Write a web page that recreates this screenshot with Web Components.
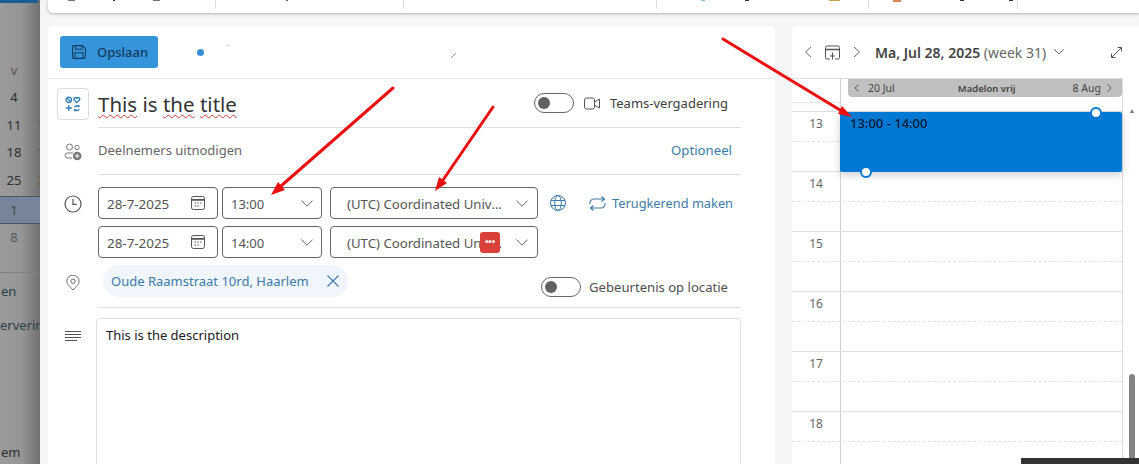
<!DOCTYPE html>
<html lang="nl">
<head>
<meta charset="utf-8">
<title>Gebeurtenis</title>
<style>
  html, body { margin: 0; height: 464px; overflow: hidden; }
  body {
    display: flex;
    position: relative;
    width: 1139px;
    background: #f5f5f5;
    font-family: "Noto Sans", "Open Sans", sans-serif;
  }
  main-shell { flex: 1; min-width: 0; }
  svg { display: block; }
</style>
</head>
<body>

<side-strip></side-strip>

<main-shell>
  <top-toolbar></top-toolbar>
  <event-form>
    <form-row>
      <svg slot="icon" style="border:1px solid #dcdcdc;border-radius:4px;padding:7px;box-sizing:content-box" width="16" height="16" viewBox="0 0 16 16" fill="none" stroke="#2f7cb3" stroke-width="1.3">
        <circle cx="3.8" cy="3.8" r="2.7"/><path d="M2 2l3.600 3.600"/>
        <path d="M11.800 6.600L9.300 4a1.500 1.500 0 0 1 2.500-1.700A1.500 1.500 0 0 1 14.400 4z"/>
        <path d="M.8 12h6M3.800 9v6"/>
        <path d="M9.400 11.300c.5-1.800 3-2 4.400-.9M13.900 9v1.600h-1.600M14.200 13c-.5 1.800-3 2-4.400.9M9.700 15.200v-1.600h1.600"/>
      </svg>
      <title-line></title-line>
    </form-row>
    <form-row short>
      <svg slot="icon" width="18" height="18" viewBox="0 0 18 18" fill="none" stroke="#777" stroke-width="1">
        <circle cx="5.500" cy="4" r="3"/><circle cx="13" cy="4.500" r="2.200"/>
        <path d="M8 15H3.500A2.500 2.500 0 0 1 1 12.500 2.500 2.500 0 0 1 3.500 10H9"/>
        <circle cx="13.200" cy="13" r="4.300" fill="#777" stroke="none"/>
        <path d="M13.200 10.800v4.400M11 13h4.400" stroke="#fff"/>
      </svg>
      <invite-line></invite-line>
    </form-row>
    <form-row plain first-time>
      <svg slot="icon" width="18" height="18" viewBox="0 0 18 18" fill="none" stroke="#555" stroke-width="1.200">
        <circle cx="9" cy="9" r="8"/><path d="M9 4v5.400h3.800"/>
      </svg>
      <time-line recurring start="13:00"></time-line>
    </form-row>
    <form-row plain second-time>
      <time-line start="14:00"></time-line>
    </form-row>
    <form-row location>
      <svg slot="icon" width="14" height="16" viewBox="0 0 16 18" fill="none" stroke="#666" stroke-width="1.100">
        <path d="M8 17C4.500 13.400 1 10.400 1 7a7 7 0 0 1 14 0c0 3.400-3.500 6.400-7 10z"/><circle cx="8" cy="7" r="2.500"/>
      </svg>
      <location-line></location-line>
    </form-row>
    <form-row plain description>
      <svg slot="icon" width="16" height="10" viewBox="0 0 16 10" stroke="#555" stroke-width="1">
        <path d="M0 .5h16M0 3.500h16M0 6.500h16M0 9.500h12"/>
      </svg>
      <description-box>This is the description</description-box>
    </form-row>
  </event-form>
</main-shell>

<red-arrows></red-arrows>

<script>
function define(name, html) {
  customElements.define(name, class extends HTMLElement {
    constructor() {
      super();
      this.attachShadow({ mode: "open" });
    }
    connectedCallback() {
      this.shadowRoot.innerHTML = typeof html === "function" ? html(this) : html;
    }
  });
}

const chevron = `<svg width="12" height="7" viewBox="0 0 12 7" fill="none" stroke="#666" stroke-width="1"><path d="M.4.600L6 6.200 11.600.6"/></svg>`;
const calendarIcon = `<svg width="14" height="14" viewBox="0 0 14 14" fill="none" stroke="#555" stroke-width="1"><rect x=".5" y=".5" width="13" height="13" rx="2"/><path d="M.5 3.800h13" stroke-width="1.800"/><path d="M3.500 7h1.500M6.300 7h1.500M9 7h1.500M3.500 10h1.500M6.300 10h1.500"/></svg>`;

define("main-shell", `
  <style>:host { display: block; }</style>
  <slot></slot>
`);

define("side-strip", `
  <style>
    :host {
      display: block; width: 40px; height: 464px; overflow: hidden; flex: none;
      background: linear-gradient(90deg, #9b9b9b 0, #959595 55%, #717171 100%);
      color: #2e2e2e; font-size: 13px;
    }
    .top { height: 3px; background: #1e5c96; margin-right: 2px; margin-bottom: 53px; }
    .r { display: flex; height: 27.5px; align-items: center; }
    .r b { font-weight: 400; width: 28px; text-align: center; flex: none; }
    .r i { font-style: normal; color: #7a5a3a; margin-left: 9px; }
    .sel { height: 26px; margin-top: 2px; background: #76859a; border-block: 1px solid #4c5663; color: #444; }
    .dim { color: #555; }
    hr { border: 0; border-top: 1px solid #7f7f7f; margin: 21px 0 0; }
    .link { white-space: nowrap; color: #263f4c; margin-left: 1px; height: 34px; line-height: 34px; }
    .a { margin-top: 1px; }
    .b { margin-left: 0; }
    .c { margin-top: 93px; color: #2e2e2e; }
  </style>
  <div class="top"></div>
  <div class="r dim"><b>v</b></div>
  <div class="r"><b>4</b></div>
  <div class="r"><b>11</b><i>1</i></div>
  <div class="r"><b>18</b><i>1</i></div>
  <div class="r"><b>25</b><i>2</i></div>
  <div class="r sel"><b>1</b></div>
  <div class="r dim"><b>8</b></div>
  <hr>
  <div class="link a">en</div>
  <div class="link b">erverin</div>
  <div class="link c">em</div>
`);

define("top-toolbar", `
  <style>
    :host {
      display: flex; height: 13px; margin-left: 8px; background: #fff;
      border-radius: 0 0 0 5px; box-shadow: 0 1px 3px rgba(0,0,0,.28);
      position: relative;
    }
    div { border-right: 1px solid #dcdcdc; height: 9px; flex: none; display: flex; gap: 38px; padding-left: 20px; box-sizing: border-box; }
    i { display: block; height: 1px; width: 7px; background: #777; }
  </style>
  <div style="width:168px"><i></i><i style="width:2px;background:#333"></i><i></i></div>
  <div style="width:188px"><i style="width:2px;margin-left:50px;background:#666"></i></div>
  <div style="width:253px"></div>
  <div style="width:212px;gap:40px"><i style="width:4px;margin-left:24px;background:#8bb8dc"></i><i style="width:4px;background:#333"></i><i style="width:11px;margin-left:40px;background:#bca24c"></i></div>
  <div style="width:149px;gap:45px"><i style="width:8px;margin-left:4px;height:2px;background:#d98a58"></i><i style="width:4px;margin-left:14px;background:#333"></i><i style="width:4px;background:#333"></i></div>
`);

define("event-form", `
  <style>
    :host { display: flex; gap: 17px; margin: 13px 0 0 8px; height: 438px; }
    .card { width: 727px; flex: none; background: #fff; border-radius: 4px 4px 0 0; overflow: hidden; }
    header { height: 53px; box-sizing: border-box; border-bottom: 1px solid #e8e8e8; display: flex; align-items: center; padding-left: 12px; }
    .save {
      width: 98px; height: 32px; box-sizing: border-box; background: #3495dc; border-radius: 3px;
      display: flex; align-items: center; gap: 11px; padding-left: 12px;
      color: #17395a; font-size: 13px; font-weight: 500;
    }
    .dot { width: 7px; height: 7px; border-radius: 50%; background: #3490d4; margin-left: 39px; }
    .speck { width: 3px; height: 1px; background: #ddd; margin: -14px 0 0 22px; }
    .speck2 { width: 5px; height: 5px; margin: 6px 0 0 222px; }
  </style>
  <section class="card">
    <header>
      <div class="save">
        <svg width="14" height="14" viewBox="0 0 14 14" fill="none" stroke="#17395a" stroke-width="1.100">
          <path d="M.6 2A1.400 1.400 0 0 1 2 .6h8.500l2.900 2.900V12A1.400 1.400 0 0 1 12 13.400H2A1.400 1.400 0 0 1 .6 12z"/>
          <path d="M3.500.8v3.500h6.500V.8M3 13.200V7.800h8v5.400"/>
        </svg>
        <span>Opslaan</span>
      </div>
      <span class="dot"></span>
      <span class="speck"></span>
      <svg class="speck2" viewBox="0 0 5 5"><path d="M0 5l5-5" stroke="#aaa"/></svg>
    </header>
    <slot></slot>
  </section>
  <calendar-panel></calendar-panel>
`);

define("form-row", (el) => {
  const isLoc = el.hasAttribute("location");
  const isFirst = el.hasAttribute("first-time");
  const isSecond = el.hasAttribute("second-time");
  const isDesc = el.hasAttribute("description");
  const height = el.hasAttribute("short") ? 47 : isFirst ? 44 : isSecond ? 39 : isLoc ? 50 : isDesc ? 146 : 49;
  return `
  <style>
    :host { display: flex; height: ${height}px; box-sizing: border-box; ${isDesc ? "margin-top:10px;" : ""} }
    .icon {
      width: 50px; flex: none; display: flex; justify-content: center;
      align-items: ${isDesc || isLoc ? "flex-start" : "center"};
      padding-top: ${isDesc ? 13 : isFirst ? 14 : isLoc ? 17 : 0}px;
      box-sizing: border-box;
    }
    .body {
      flex: 1; min-width: 0; margin-right: 34px; box-sizing: border-box;
      ${el.hasAttribute("plain") ? "" : "border-bottom: 1px solid #e1e1e1;"}
      ${isFirst || isSecond ? "display:flex;align-items:flex-end;" : ""}
    }
  </style>
  <div class="icon"><slot name="icon"></slot></div>
  <div class="body"><slot></slot></div>`;
});

define("title-line", `
  <style>
    :host { display: flex; align-items: center; height: 100%; font-size: 20.5px; color: #333; padding-right: 13px; }
    u { text-decoration: underline wavy #c8413b 1px; text-underline-offset: 2px; }
    .t { flex: 1; white-space: nowrap; padding-top: 2px; }
    .w { display: flex; align-items: center; }
  </style>
  <span class="t"><u>This</u> is <u>the</u> <u>title</u></span>
  <span class="w"><ui-toggle></ui-toggle>
    <svg style="margin:0 10px" width="16" height="13" viewBox="0 0 16 13" fill="none" stroke="#555" stroke-width="1"><rect x=".5" y="1" width="10" height="11" rx="2"/><path d="M10.500 5l5-3v9l-5-3"/></svg>
    <span style="font-size:13px;color:#404040">Teams-vergadering</span></span>
`);

define("invite-line", `
  <style>
    :host { display: flex; align-items: center; justify-content: space-between; height: 100%; padding: 0 9px 2px 0; box-sizing: border-box; font-size: 13px; color: #666; }
    .o { color: #3d7ba6; font-size: 13.2px; }
  </style>
  <span>Deelnemers uitnodigen</span><span class="o">Optioneel</span>
`);

define("ui-toggle", `
  <style>
    :host { display: flex; align-items: center; width: 40px; height: 20px; box-sizing: border-box; border: 1px solid #666; border-radius: 10px; padding-left: 3px; background: #fff; flex: none; }
    i { display: block; width: 12px; height: 12px; border-radius: 50%; background: #616161; }
  </style>
  <i></i>
`);

define("ui-field", (el) => `
  <style>
    :host {
      display: flex; align-items: center; position: relative; box-sizing: border-box; flex: none;
      height: 32px; width: ${el.getAttribute("w")}px; border: 1px solid #666; border-radius: 4px;
      padding: 0 ${el.getAttribute("pr") || 12}px 0 ${el.getAttribute("pl") || 8}px;
      font-size: 13px; color: #555; background: #fff;
    }
    .v { flex: 1; min-width: 0; padding-top: 1px; white-space: nowrap; overflow: hidden; text-overflow: ellipsis; }
    .end { flex: none; margin-left: 10px; display: flex; align-items: center; }
  </style>
  <span class="v"><slot></slot></span><div class="end"><slot name="end"></slot></div>
`);

define("time-line", (el) => `
  <style>
    :host { display: flex; align-items: center; gap: 4px; font-size: 13px; }
    .e { display: flex; }
    .date { font-size: 13.4px; }
    .tz { margin-left: 4px; font-size: 13.2px; }
    .globe { margin-left: 8px; }
    .rec { display: flex; align-items: center; gap: 6px; margin-left: 19px; font-size: 12.8px; color: #3d7ba6; white-space: nowrap; }
    .lp { position: absolute; left: 149px; top: 5px; width: 20px; height: 21px; border-radius: 3px; background: #d9403a; color: #fff; font-size: 9px; line-height: 20px; text-align: center; }
  </style>
  <ui-field class="date" w="120" pr="12" pl="8">28-7-2025<span class="e" slot="end">${calendarIcon}</span></ui-field>
  <ui-field w="100" pl="8" pr="8">${el.getAttribute("start")}<span class="e" slot="end">${chevron}</span></ui-field>
  <ui-field class="tz" w="208" pl="16" pr="9">(UTC) Coordinated Universal Time<span class="e" slot="end">${chevron}</span>${el.hasAttribute("recurring") ? "" : `<b class="lp" slot="end">•••</b>`}</ui-field>
  ${el.hasAttribute("recurring") ? `
  <svg class="globe" width="16" height="16" viewBox="0 0 16 16" fill="none" stroke="#3d7ba6" stroke-width="1"><circle cx="8" cy="8" r="7.500"/><ellipse cx="8" cy="8" rx="3.300" ry="7.500"/><path d="M1 5.500h14M1 10.500h14"/></svg>
  <span class="rec">
    <svg width="17" height="15" viewBox="0 0 17 15" fill="none" stroke="#3d7ba6" stroke-width="1.100"><path d="M1 8c-.5-3 1.500-5 4-5h10M12.500.5L15.500 3l-3 2.500M16 7c.5 3-1.500 5-4 5H2M4.500 9.500L1.500 12l3 2.500"/></svg>
    Terugkerend maken</span>` : ""}
`);

define("location-line", `
  <style>
    :host { display: flex; align-items: flex-start; height: 100%; padding: 7px 13px 0 5px; box-sizing: border-box; font-size: 13px; }
    .chip { display: flex; align-items: center; width: 245px; height: 32px; box-sizing: border-box; padding: 0 9px 0 8px; border-radius: 16px; background: #f0f6fb; color: #3d7ba6; font-size: 13px; justify-content: space-between; white-space: nowrap; }
    .r { margin-left: auto; margin-top: 12px; display: flex; align-items: center; gap: 8px; color: #505050; font-size: 13.1px; }
  </style>
  <span class="chip">Oude Raamstraat 10rd, Haarlem
    <svg width="12" height="12" viewBox="0 0 12 12" stroke="#3d7ba6" stroke-width="1.100"><path d="M.5.500l11 11M11.500.500l-11 11"/></svg></span>
  <span class="r"><ui-toggle></ui-toggle><span>Gebeurtenis op locatie</span></span>
`);

define("description-box", `
  <style>
    :host {
      display: block; height: 200px; margin-left: -2px; box-sizing: border-box;
      border: 1px solid #e0e0e0; border-radius: 4px; padding: 7px 9px;
      font-size: 13px; line-height: 18px; color: #1a1a1a;
    }
  </style>
  <slot></slot>
`);

define("calendar-panel", `
  <style>
    :host { display: block; flex: 1; min-width: 0; background: #fff; position: relative; overflow: hidden; border-radius: 4px 0 0 0; }
    header { height: 52px; display: flex; align-items: center; color: #444; font-size: 14px; padding-left: 12px; box-sizing: border-box; }
    .title b { font-weight: 600; }
    .title span { color: #666; }
    .grid { width: 331px; border-top: 1px solid #dedede; border-right: 1px solid #dedede; box-sizing: border-box; }
    .allday { display: flex; height: 32px; }
    .gut { width: 48px; height: 23px; border-bottom: 1px solid #e6e6e6; flex: none; }
    .right { flex: 1; border-left: 1px solid #d2d2d2; display: flex; align-items: flex-start; min-width: 0; padding-left: 7px; }
    .bar { flex: 1; height: 18px; background: #c0c0c0; border-radius: 0 0 4px 4px; display: flex; align-items: center; justify-content: space-between; padding: 0 10px 0 6px; font-size: 10.5px; color: #444; }
    .bar b { font-size: 9.5px; font-weight: 600; margin-left: 6px; }
    .bar span { display: flex; align-items: center; gap: 6px; }
    .bar span:first-child { gap: 9px; }
    .hours { position: relative; }
    .event { position: absolute; left: 48px; top: 1px; width: 282px; height: 60px; background: #0078d4; border-radius: 2px; box-shadow: 0 3px 8px rgba(0,0,0,.2); padding: 2px 10px; box-sizing: border-box; font-size: 13px; font-weight: 500; color: #0b1a33; }
    .h { position: absolute; width: 8px; height: 8px; background: #fff; border: 2px solid #0078d4; border-radius: 50%; }
    .caret { position: absolute; left: 338px; top: 83px; width: 0; height: 0; border: 2.5px solid transparent; border-bottom: 4px solid #777; border-top: 0; }
    .thumb { position: absolute; left: 337px; top: 348px; width: 6px; height: 100px; border-radius: 3px 3px 0 0; background: #848484; }
    .tip { position: absolute; left: 229px; top: 432px; width: 118px; height: 6px; background: #333; }
  </style>
  <header>
    <svg width="8" height="12" viewBox="0 0 8 12" fill="none" stroke="#666"><path d="M7 1L1.500 6 7 11"/></svg>
    <svg style="margin-left:13px" width="15" height="15" viewBox="0 0 15 15" fill="none" stroke="#555"><path d="M5 14H2a1.500 1.500 0 0 1-1.500-1.500v-10A1.500 1.500 0 0 1 2 1h11a1.500 1.500 0 0 1 1.500 1.500v10A1.500 1.500 0 0 1 13 14h-3"/><path d="M.5 4.500h14" stroke-width="1.400"/><path d="M7.500 7.500v7M5 11h5"/></svg>
    <svg style="margin-left:13px" width="8" height="12" viewBox="0 0 8 12" fill="none" stroke="#666"><path d="M1 1l5.500 5L1 11"/></svg>
    <span class="title" style="margin-left:14px;white-space:nowrap"><b>Ma, Jul 28, 2025</b> <span>(week 31)</span></span>
    <svg style="margin-left:8px" width="10" height="6" viewBox="0 0 10 6" fill="none" stroke="#666"><path d="M.5.500L5 5 9.500.500"/></svg>
    <svg style="margin-left:auto;margin-right:17px" width="11" height="11" viewBox="0 0 11 11" fill="none" stroke="#555"><path d="M.5 6.500v4h4M10.500 4.500v-4h-4M.5 10.500l10-10"/></svg>
  </header>
  <div class="grid">
    <div class="allday">
      <div class="gut"></div>
      <div class="right">
        <div class="bar">
          <span><svg width="5" height="8" viewBox="0 0 5 8" fill="none" stroke="#555"><path d="M4.500.500L1 4l3.500 3.500"/></svg> 20 Jul</span>
          <b>Madelon vrij</b>
          <span>8 Aug <svg width="5" height="8" viewBox="0 0 5 8" fill="none" stroke="#555"><path d="M.500.500L4 4 .500 7.500"/></svg></span>
        </div>
      </div>
    </div>
    <div class="hours">
      <hour-row>13</hour-row><hour-row>14</hour-row><hour-row>15</hour-row>
      <hour-row>16</hour-row><hour-row>17</hour-row><hour-row>18</hour-row>
      <div class="event">13:00 - 14:00
        <span class="h" style="left:250px;top:-5px"></span>
        <span class="h" style="left:20px;top:54px"></span>
      </div>
    </div>
  </div>
  <span class="caret"></span>
  <span class="thumb"></span>
  <span class="tip"></span>
`);

define("hour-row", `
  <style>
    :host { display: flex; height: 60px; box-sizing: border-box; border-top: 1px solid #e0e0e0; position: relative; }
    .n { width: 48px; flex: none; box-sizing: border-box; padding-top: 3px; text-align: center; font-size: 12px; color: #666; }
    .c { flex: 1; border-left: 1px solid #d2d2d2; }
    .half { position: absolute; left: 0; right: 0; top: 29px; border-top: 1px dashed #e2e2e2; }
  </style>
  <div class="n"><slot></slot></div><div class="c"></div><div class="half"></div>
`);

define("red-arrows", `
  <style>
    :host { position: absolute; inset: 0; pointer-events: none; }
  </style>
  <svg width="1139" height="464" stroke="#e81010" stroke-width="3" fill="#e81010" stroke-linecap="round">
    <path d="M393 88L281 186"/><path stroke="none" d="M271 195L285 190L278 182z"/>
    <path d="M493 107L443 180"/><path stroke="none" d="M435 191L447 183L439 177z"/>
    <path d="M723 39L840 110"/><path stroke="none" d="M852 117L838 114L842 106z"/>
  </svg>
`);
</script>
</body>
</html>
